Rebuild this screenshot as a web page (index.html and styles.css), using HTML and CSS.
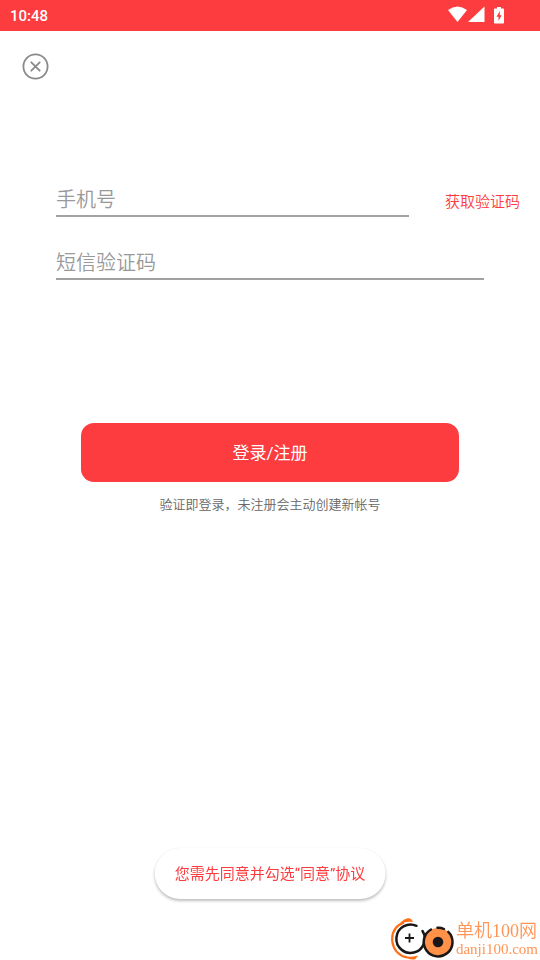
FILE: index.html
```html
<!DOCTYPE html>
<html lang="zh-CN">
<head>
<meta charset="utf-8">
<meta name="viewport" content="width=device-width, initial-scale=1">
<title>登录/注册</title>
<link rel="stylesheet" href="styles.css">
</head>
<body>
<header class="status">
  <time class="status-time">10:48</time>
  <svg class="status-icons" width="58" height="18" viewBox="0 0 58 18" fill="currentColor" aria-hidden="true">
    <path d="M0 3Q9.500-4 19 3L9.500 15Z"/>
    <path d="M36.500-.5V15H20Z"/>
    <path fill-rule="evenodd" d="M49 0h4v1.500h2.200q.8 0 .8.800v13.400q0 .8-.8.800h-8.400q-.8 0-.8-.8V2.300q0-.8.800-.8H49ZM51.800 4 48.500 9.800h2v4.200l3.200-5.700h-1.900Z"/>
  </svg>
</header>

<main class="page">
  <button class="close" type="button" aria-label="关闭">
    <svg width="27" height="27" viewBox="0 0 27 27" fill="none" stroke="currentColor" aria-hidden="true">
      <circle cx="13.500" cy="13.500" r="12.100" stroke-width="1.800"/>
      <path d="M9.300 9.300l8.400 8.400M17.700 9.300l-8.400 8.400" stroke-width="1.800" stroke-linecap="round"/>
    </svg>
  </button>

  <form class="login">
    <div class="row">
      <input class="field" type="tel" aria-label="手机号" placeholder="手机号">
      <button class="send" type="button">获取验证码</button>
    </div>
    <div class="row row-code">
      <input class="field" type="text" inputmode="numeric" aria-label="短信验证码" placeholder="短信验证码">
    </div>
    <button class="submit" type="submit">登录/注册</button>
    <p class="note">验证即登录，未注册会主动创建新帐号</p>
  </form>
</main>

<div class="toast" role="status">您需先同意并勾选“同意”协议</div>

<div class="mark">
  <svg width="65" height="42" viewBox="0 0 65 42" fill="none" aria-hidden="true">
    <path d="M14 4.500C4.500 8 1.500 15 2.300 23.500 3.500 32 9 38 17 39.500" stroke="#ff6f16" stroke-width="2.200"/>
    <path d="M9 7C12 2 17-.5 20 .5q2.500 1 3 3.500Q15 3 9 7Z" fill="#ff6f16"/>
    <path d="M12 37.500q7 2.500 16 0l-2.500 3.500q-5 2-13.500-3.500Z" fill="#ff6f16"/>
    <path d="M26.500 7.800A14.200 14.200 0 1 0 32.500 13" stroke="#1b1718" stroke-width="2.500" stroke-linecap="round"/>
    <path d="M19.500 15.500v9M15 20h9" stroke="#1b1718" stroke-width="1.800"/>
    <circle cx="48" cy="24" r="14" fill="#ff9248"/>
    <path d="M41 11.500A14.400 14.400 0 1 0 58.300 13.800" stroke="#1b1718" stroke-width="2.500" stroke-linecap="round"/>
    <path d="M47.500 9.700Q51 9.500 54 11" stroke="#1b1718" stroke-width="2.500" stroke-linecap="round"/>
    <circle cx="48" cy="24" r="5.300" fill="#1b1718"/>
  </svg>
  <div class="mark-text">
    <span class="mark-name">单机100网</span>
    <span class="mark-site">danji100.com</span>
  </div>
</div>
</body>
</html>
```
FILE: styles.css
```css
* {
  box-sizing: border-box;
}

body {
  margin: 0;
  min-height: 100vh;
  background: #fff;
  font-family: Roboto, "Noto Sans CJK SC", sans-serif;
  font-weight: 350;
}

button,
input {
  margin: 0;
  padding: 0;
  border: 0;
  background: none;
  font: inherit;
}

.status {
  display: flex;
  align-items: center;
  justify-content: space-between;
  height: 31px;
  padding: 0 34px 0 10px;
  background: #fc3c3f;
  color: #fff;
}

.status-icons {
  overflow: visible;
}

.status-time {
  padding-top: 1px;
  font-size: 15px;
  font-weight: 500;
}

.page {
  padding-top: 22px;
}

.close {
  display: block;
  width: 27px;
  height: 27px;
  margin-left: 22px;
  color: #8a8a8a;
}

.close svg {
  display: block;
}

.login {
  display: flex;
  flex-direction: column;
  padding-top: 100px;
}

.row {
  display: flex;
  align-items: center;
  gap: 36px;
  padding: 0 20px 0 56px;
}

.row-code {
  margin-top: 26px;
  padding-right: 56px;
}

.field {
  flex: 1;
  min-width: 0;
  height: 37px;
  padding-top: 4px;
  border-bottom: 2px solid #a2a2a2;
  border-radius: 0;
  outline: 0;
  color: #333;
  font-size: 20px;
}

.field::placeholder {
  color: #999;
  opacity: 1;
}

.send {
  padding-top: 4px;
  color: #fc3c3f;
  font-size: 15px;
}

.submit {
  height: 59px;
  margin: 143px 81px 0;
  padding-bottom: 2px;
  border-radius: 13px;
  background: #fc3c3f;
  color: #fff;
  font-size: 17px;
  font-weight: 400;
}

.note {
  margin: 13px 0 0;
  color: #666;
  font-size: 13px;
  line-height: 20px;
  text-align: center;
}

.toast {
  position: fixed;
  bottom: 61px;
  left: 50%;
  transform: translateX(-50%);
  padding: 1px 20px 0;
  border-radius: 26px;
  background: #fff;
  box-shadow: 0 2px 3px rgba(0, 0, 0, 0.25), 0 0 1px rgba(0, 0, 0, 0.1);
  color: #fc3c3f;
  font-size: 15px;
  font-weight: 400;
  line-height: 50px;
  white-space: nowrap;
}

.mark {
  position: fixed;
  right: 2px;
  bottom: 0;
  display: flex;
  align-items: center;
  gap: 1px;
}

.mark-text {
  display: flex;
  flex-direction: column;
  color: #ff9557;
  font-family: "Liberation Serif", "Noto Sans CJK SC", serif;
  white-space: nowrap;
}

.mark-name {
  font-size: 18px;
  line-height: 20px;
}

.mark-site {
  font-size: 15px;
  line-height: 16px;
}
```
